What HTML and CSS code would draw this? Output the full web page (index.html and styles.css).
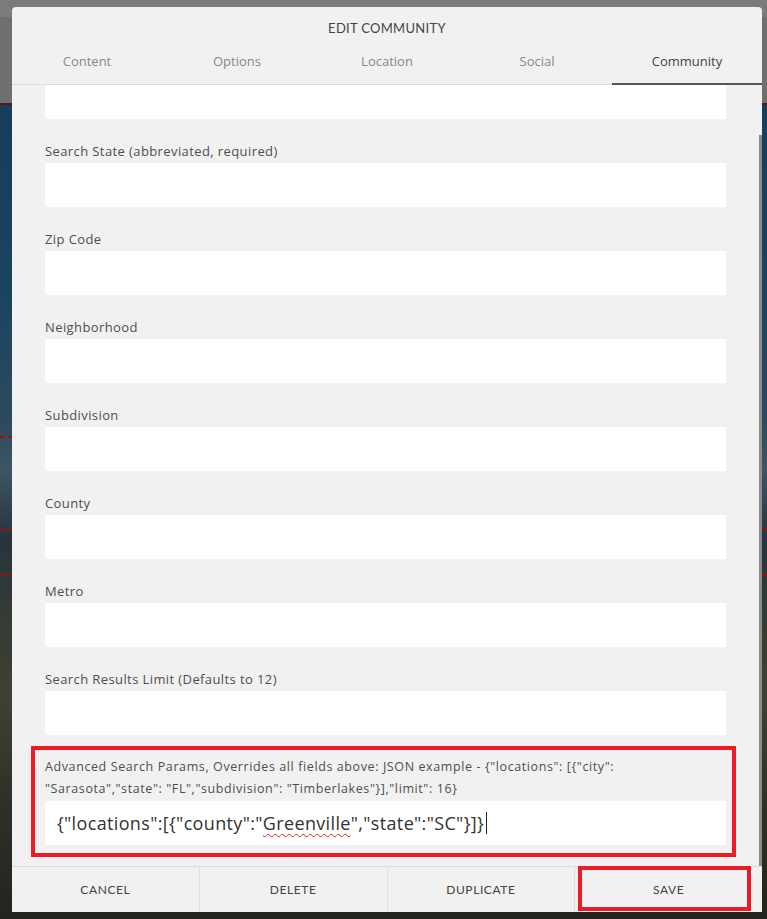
FILE: index.html
```html
<!DOCTYPE html>
<html lang="en">
<head>
    <meta charset="UTF-8">
    <meta name="viewport" content="width=device-width, initial-scale=1.0">
    <title>Edit Community</title>
    <link rel="stylesheet" href="styles.css">
</head>
<body>

    <div class="modal">
        <!-- En-tête : titre et onglets -->
        <div class="modal-head">
            <h2 class="modal-title">Edit Community</h2>
            <nav class="tabs">
                <a class="tab">Content</a>
                <a class="tab">Options</a>
                <a class="tab">Location</a>
                <a class="tab">Social</a>
                <a class="tab active">Community</a>
            </nav>
        </div>

        <!-- Champs (la liste est déjà défilée) -->
        <div class="modal-body">
            <input type="text" class="field-input cut">

            <div class="field">
                <label>Search State (abbreviated, required)</label>
                <input type="text" class="field-input">
            </div>
            <div class="field">
                <label>Zip Code</label>
                <input type="text" class="field-input">
            </div>
            <div class="field">
                <label>Neighborhood</label>
                <input type="text" class="field-input">
            </div>
            <div class="field">
                <label>Subdivision</label>
                <input type="text" class="field-input">
            </div>
            <div class="field">
                <label>County</label>
                <input type="text" class="field-input">
            </div>
            <div class="field">
                <label>Metro</label>
                <input type="text" class="field-input">
            </div>
            <div class="field">
                <label>Search Results Limit (Defaults to 12)</label>
                <input type="text" class="field-input">
            </div>
            <div class="field marked">
                <label class="long">Advanced Search Params, Overrides all fields above: JSON example - {"locations": [{"city": "Sarasota","state": "FL","subdivision": "Timberlakes"}],"limit": 16}</label>
                <div class="field-input filled">{"locations":[{"county":"<span class="typo">Greenville</span>","state":"SC"}]}<span class="caret"></span></div>
            </div>

            <span class="scroll-thumb"></span>
        </div>

        <!-- Boutons du bas -->
        <div class="modal-foot">
            <button class="foot-btn">Cancel</button>
            <button class="foot-btn">Delete</button>
            <button class="foot-btn">Duplicate</button>
            <button class="foot-btn marked">Save</button>
        </div>
    </div>

</body>
</html>
```

FILE: styles.css
```css
body {
    margin: 0;
    min-height: 919px;
    font-family: "Open Sans", Lato, sans-serif;
    background:
        repeating-linear-gradient(90deg, #9a1010 0 5px, transparent 5px 8px) 0 436px / 12px 2px no-repeat,
        repeating-linear-gradient(90deg, #9a1010 0 5px, transparent 5px 8px) 0 528px / 12px 2px no-repeat,
        repeating-linear-gradient(90deg, #9a1010 0 5px, transparent 5px 8px) 0 574px / 12px 2px no-repeat,
        repeating-linear-gradient(90deg, #9a1010 0 5px, transparent 5px 8px) 762px 528px / 5px 2px no-repeat,
        repeating-linear-gradient(90deg, #9a1010 0 5px, transparent 5px 8px) 762px 574px / 5px 2px no-repeat,
        linear-gradient(to bottom, #7b7b7b 0 17px, #6f6f6f 17px 103px, #5a1414 103px 105px,
            #163d5b 105px, #1b4461 300px, #2c4a5d 420px, #3d5562 470px, #28343e 540px,
            #343c33 620px, #3f4034 700px, #2e2d26 820px, #25231e 919px);
}

.modal {
    width: 750px;
    height: 905px;
    margin: 7px 0 0 12px;
    background: #f1f1f1;
    border-radius: 4px 4px 0 0;
    display: flex;
    flex-direction: column;
}

.modal-head { border-bottom: 1px solid #dadada; }
.modal-title {
    margin: 0;
    padding-top: 13px;
    font-family: Lato, sans-serif;
    font-size: 13px;
    line-height: 16px;
    font-weight: 400;
    text-align: center;
    text-transform: uppercase;
    letter-spacing: 0.3px;
    color: #444;
}
.tabs { display: flex; margin: 11px 0 -1px; }
.tab {
    flex: 1;
    padding: 6px 0 14px;
    font-size: 13px;
    line-height: 16px;
    text-align: center;
    color: #888;
    border-bottom: 2px solid transparent;
}
.tab.active { color: #444; border-bottom-color: #555; }

.modal-body {
    flex: 1;
    overflow: hidden;
    position: relative;
    padding: 0 36px 0 33px;
}
.field { margin-top: 21px; position: relative; }
.field label {
    display: block;
    margin-bottom: 1px;
    font-size: 13px;
    line-height: 22px;
    letter-spacing: 0.4px;
    color: #4e4e4e;
}
.field label.long { max-width: 640px; font-size: 12.5px; letter-spacing: 0.6px; }
.field-input {
    display: block;
    width: 100%;
    height: 44px;
    box-sizing: border-box;
    border: none;
    padding: 0 12px;
    background: #fff;
    font-family: "Open Sans", sans-serif;
    font-size: 18px;
    letter-spacing: 0.35px;
    color: #333;
}
.field-input.cut { height: 34px; }
.filled { display: flex; align-items: center; white-space: nowrap; }
.typo {
    text-decoration: underline wavy #e02020;
    text-decoration-thickness: 1px;
    text-underline-offset: 3px;
}
.caret { width: 1px; height: 22px; margin-left: 2px; background: #222; }

.scroll-thumb {
    position: absolute;
    right: 0;
    top: 50px;
    bottom: 0;
    width: 3px;
    background: #8c8c8c;
}

.modal-foot { display: flex; border-top: 1px solid #dcdcdc; height: 45px; }
.foot-btn {
    flex: 1;
    position: relative;
    border: none;
    border-left: 1px solid #e0e0e0;
    background: #f1f1f1;
    font-family: Lato, sans-serif;
    font-size: 12px;
    text-transform: uppercase;
    letter-spacing: 0.6px;
    color: #444;
    cursor: pointer;
}
.foot-btn:first-child { border-left: none; }

/* cadres rouges d'annotation */
.marked::after {
    content: "";
    position: absolute;
    border: 4px solid #ed1c24;
    pointer-events: none;
}
.field.marked::after { left: -14px; right: -10px; top: -10px; bottom: -12px; }
.foot-btn.marked::after { left: 3px; right: 11px; top: -1px; bottom: 1px; }
```
